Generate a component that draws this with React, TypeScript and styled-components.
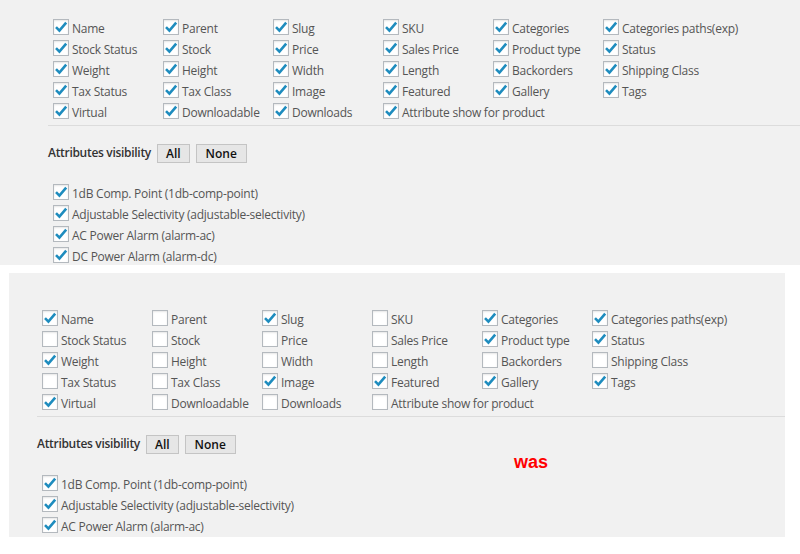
import * as React from 'react';
import styled, { createGlobalStyle } from 'styled-components';

const GlobalStyle = createGlobalStyle`
  html, body {
    margin: 0;
    padding: 0;
    background: #ffffff;
  }
  body {
    font-family: "Open Sans", "Liberation Sans", sans-serif;
  }
`;

const FIELDS = [
  'Name', 'Parent', 'Slug', 'SKU', 'Categories', 'Categories paths(exp)',
  'Stock Status', 'Stock', 'Price', 'Sales Price', 'Product type', 'Status',
  'Weight', 'Height', 'Width', 'Length', 'Backorders', 'Shipping Class',
  'Tax Status', 'Tax Class', 'Image', 'Featured', 'Gallery', 'Tags',
  'Virtual', 'Downloadable', 'Downloads', 'Attribute show for product',
];

const ATTRIBUTES = [
  '1dB Comp. Point (1db-comp-point)',
  'Adjustable Selectivity (adjustable-selectivity)',
  'AC Power Alarm (alarm-ac)',
  'DC Power Alarm (alarm-dc)',
];

// what the old version had ticked
const WAS_CHECKED = [
  'Name', 'Slug', 'Categories', 'Categories paths(exp)', 'Product type', 'Status',
  'Weight', 'Image', 'Featured', 'Gallery', 'Tags', 'Virtual',
];

const Page = styled.div`
  width: 800px;
  height: 554px;
  display: flex;
  flex-direction: column;
  gap: 8px;
`;

const Panel = styled.div<{ $inset: number; $pad: number; $top: number; $height: number }>`
  position: relative;
  box-sizing: border-box;
  margin: 0 ${(p) => p.$inset === 0 ? 0 : 15}px 0 ${(p) => p.$inset}px;
  height: ${(p) => p.$height}px;
  padding: ${(p) => p.$top}px 0 0 ${(p) => p.$pad}px;
  background: #f1f1f1;
  overflow: hidden;
`;

const FieldGrid = styled.div`
  display: grid;
  grid-template-columns: repeat(6, 110px);
  grid-auto-rows: 21px;
  padding-left: 5px;
`;

const Option = styled.label`
  display: flex;
  align-items: center;
  gap: 3px;
  font-size: 12px;
  letter-spacing: -0.25px;
  color: #555;
  white-space: nowrap;
`;

const OptionText = styled.span`
  padding-top: 3px;
`;

const Box = styled.span`
  flex: none;
  box-sizing: border-box;
  width: 16px;
  height: 16px;
  border: 1px solid #b4b9be;
  background: #fff;
  box-shadow: inset 0 1px 2px rgba(0, 0, 0, 0.1);
  display: flex;
  align-items: center;
  justify-content: center;
`;

const Divider = styled.div`
  margin-top: 4px;
  border-top: 1px solid #dcdcdc;
`;

const VisibilityRow = styled.div`
  display: flex;
  align-items: center;
  gap: 6px;
  margin-top: 18px;
  font-size: 12px;
  font-weight: 600;
  letter-spacing: -0.3px;
  color: #333;
`;

const Caption = styled.span`
  margin-top: -3px;
`;

const SmallButton = styled.button<{ $wide?: boolean }>`
  box-sizing: border-box;
  height: 19px;
  padding: 0 ${(p) => p.$wide ? 9 : 8}px;
  border: 1px solid #c4c4c4;
  background: #e6e6e6;
  font-family: "Open Sans", "Liberation Sans", sans-serif;
  font-size: 12px;
  font-weight: 600;
  color: #111;
  line-height: 17px;
`;

const AttributeList = styled.div`
  display: grid;
  grid-auto-rows: 21px;
  margin-top: 18px;
  padding-left: 5px;
`;

const Note = styled.span`
  position: absolute;
  left: 505px;
  top: 180px;
  font-family: "Liberation Sans", Arial, sans-serif;
  font-size: 18px;
  font-weight: bold;
  line-height: 1;
  color: #ff0000;
`;

const Check = ({ on }: { on: boolean }) => (
  <Box>
    {on && (
      <svg width="14" height="14" viewBox="0 0 14 14">
        <path d="M2 7.2 L5.4 10.6 L12.2 2.6" fill="none" stroke="#1e8cbe" strokeWidth="2.6" strokeLinecap="butt" strokeLinejoin="miter" />
      </svg>
    )}
  </Box>
);

const Settings = ({ isChecked, shown }: { isChecked: (name: string) => boolean; shown: number }) => (
  <>
    <FieldGrid>
      {FIELDS.map((f) => (
        <Option key={f}>
          <Check on={isChecked(f)} />
          <OptionText>{f}</OptionText>
        </Option>
      ))}
    </FieldGrid>
    <Divider />
    <VisibilityRow>
      <Caption>Attributes visibility</Caption>
      <SmallButton>All</SmallButton>
      <SmallButton $wide>None</SmallButton>
    </VisibilityRow>
    <AttributeList>
      {ATTRIBUTES.slice(0, shown).map((a) => (
        <Option key={a}>
          <Check on />
          <OptionText>{a}</OptionText>
        </Option>
      ))}
    </AttributeList>
  </>
);

export default function App() {
  return (
    <Page>
      <GlobalStyle />
      <Panel $inset={0} $pad={48} $top={16} $height={265}>
        <Settings isChecked={() => true} shown={4} />
      </Panel>
      <Panel $inset={9} $pad={28} $top={34} $height={264}>
        <Settings isChecked={(f) => WAS_CHECKED.includes(f)} shown={3} />
        <Note>was</Note>
      </Panel>
    </Page>
  );
}
